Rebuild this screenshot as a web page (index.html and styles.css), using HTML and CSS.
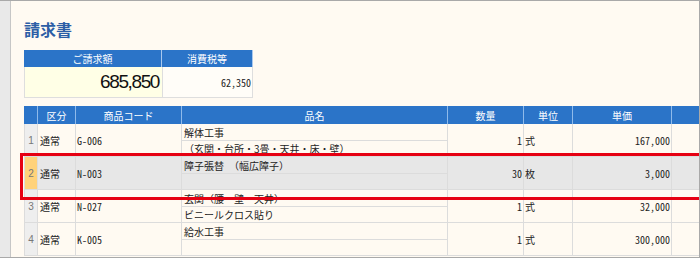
FILE: index.html
```html
<!DOCTYPE html>
<html lang="ja">
<head>
<meta charset="utf-8">
<title>請求書</title>
<link rel="stylesheet" href="styles.css">
</head>
<body>
<div class="frame">
  <div class="side"></div>
  <div class="content">
    <h1 class="title">請求書</h1>
    <div class="summary">
      <div class="sh">ご請求額</div>
      <div class="sh">消費税等</div>
      <div class="sv total">685,850</div>
      <div class="sv tax">62,350</div>
    </div>
    <div class="sheet">
      <div class="row head">
        <div class="c idx"></div>
        <div class="c">区分</div>
        <div class="c">商品コード</div>
        <div class="c">品名</div>
        <div class="c">数量</div>
        <div class="c">単位</div>
        <div class="c">単価</div>
        <div class="c"></div>
      </div>
      <div class="row">
        <div class="c idx">1</div>
        <div class="c kb">通常</div>
        <div class="c code">G-006</div>
        <div class="c name"><div class="ln">解体工事</div><div class="ln">（玄関・台所・3畳・天井・床・壁）</div></div>
        <div class="c num">1</div>
        <div class="c unit">式</div>
        <div class="c num">167,000</div>
        <div class="c"></div>
      </div>
      <div class="row sel">
        <div class="c idx">2</div>
        <div class="c kb">通常</div>
        <div class="c code">N-003</div>
        <div class="c name"><div class="ln">障子張替　（幅広障子）</div><div class="ln"></div></div>
        <div class="c num">30</div>
        <div class="c unit">枚</div>
        <div class="c num">3,000</div>
        <div class="c"></div>
      </div>
      <div class="row">
        <div class="c idx">3</div>
        <div class="c kb">通常</div>
        <div class="c code">N-027</div>
        <div class="c name"><div class="ln">玄関（腰・壁・天井）</div><div class="ln">ビニールクロス貼り</div></div>
        <div class="c num">1</div>
        <div class="c unit">式</div>
        <div class="c num">32,000</div>
        <div class="c"></div>
      </div>
      <div class="row">
        <div class="c idx">4</div>
        <div class="c kb">通常</div>
        <div class="c code">K-005</div>
        <div class="c name"><div class="ln">給水工事</div><div class="ln"></div></div>
        <div class="c num">1</div>
        <div class="c unit">式</div>
        <div class="c num">300,000</div>
        <div class="c"></div>
      </div>
    </div>
  </div>
</div>
</body>
</html>
```

FILE: styles.css
```css
* { box-sizing: border-box; }
html, body { margin: 0; padding: 0; }
body {
  width: 700px;
  height: 258px;
  overflow: hidden;
  font-family: "Noto Sans CJK JP", "Liberation Sans", sans-serif;
  font-size: 10px;
  color: #222;
}
.frame {
  width: 700px;
  height: 258px;
  display: flex;
  border-top: 1px solid #a9a9a9;
  border-right: 1px solid #a9a9a9;
  border-bottom: 1px solid #a9a9a9;
  overflow: hidden;
}
.side {
  width: 11px;
  flex: none;
  background: #e9e9e9;
  border-right: 1px solid #c6c6c6;
}
.content {
  flex: 1;
  min-width: 0;
  background: #fffaf2;
  padding: 17px 0 0 13px;
  overflow: hidden;
}
.title {
  margin: 0;
  height: 22px;
  line-height: 22px;
  font-size: 16px;
  font-weight: bold;
  color: #2c5ea6;
}
.summary {
  margin-top: 10px;
  display: grid;
  grid-template-columns: 138px 91px;
  grid-template-rows: 17px 31px;
  width: 229px;
}
.sh {
  background: #2b74c8;
  color: #fff;
  text-align: center;
  line-height: 17px;
  font-size: 10px;
  border-right: 1px solid #a9c8ee;
}
.sh:last-of-type { border-right: 1px solid #2b74c8; }
.sv {
  border: 1px solid #dedede;
  border-top: none;
  display: flex;
  align-items: center;
  justify-content: flex-end;
}
.total {
  background: #ffffe6;
  border-right: none;
  padding-right: 3px;
  font-family: "Liberation Sans", Arial, sans-serif;
  font-size: 19px;
  letter-spacing: -1.4px;
  color: #111;
}
.tax {
  background: #fffdf8;
  padding-right: 1px;
  font-family: "Noto Sans Mono CJK JP", "Liberation Mono", monospace;
  font-size: 10px;
  color: #222;
}
.sheet {
  margin-top: 8px;
}
.row {
  display: grid;
  grid-template-columns: 14px 38px 106px 266px 76px 49px 99px 60px;
  height: 33px;
  position: relative;
}
.c {
  border-right: 1px solid #dcdcdc;
  border-bottom: 1px solid #dcdcdc;
  display: flex;
  align-items: center;
  white-space: nowrap;
  overflow: hidden;
}
.head { height: 18px; }
.head .c {
  background: #2b74c8;
  color: #fff;
  justify-content: center;
  border-right: 1px solid #8fbaea;
  border-bottom: none;
  font-size: 10px;
}
.idx {
  justify-content: center;
  background: #eeeeee;
  color: #777;
  border-left: 1px solid #dcdcdc;
  font-family: "Liberation Sans", sans-serif;
  font-size: 10px;
}
.head .idx { border-left: none; }
.kb { padding-left: 2px; }
.code {
  padding-left: 1px;
  font-family: "Noto Sans Mono CJK JP", "Liberation Mono", monospace;
}
.num {
  justify-content: flex-end;
  padding-right: 1px;
  font-family: "Noto Sans Mono CJK JP", "Liberation Mono", monospace;
}
.unit { padding-left: 1px; }
.name {
  display: flex;
  flex-direction: column;
  align-items: stretch;
}
.ln {
  flex: 1;
  display: flex;
  align-items: center;
  padding-left: 2px;
}
.ln:first-child {
  flex: none;
  height: 17px;
  border-bottom: 1px solid #dcdcdc;
}
.sel { z-index: 2; }
.sel .c { background: #e7e7e7; }
.sel .idx { background: #ffd27a; color: #777; }
.sel::after {
  content: "";
  position: absolute;
  left: -4px;
  top: -4px;
  width: 678px;
  height: 41px;
  border: 3px solid #e60012;
  pointer-events: none;
}
```
